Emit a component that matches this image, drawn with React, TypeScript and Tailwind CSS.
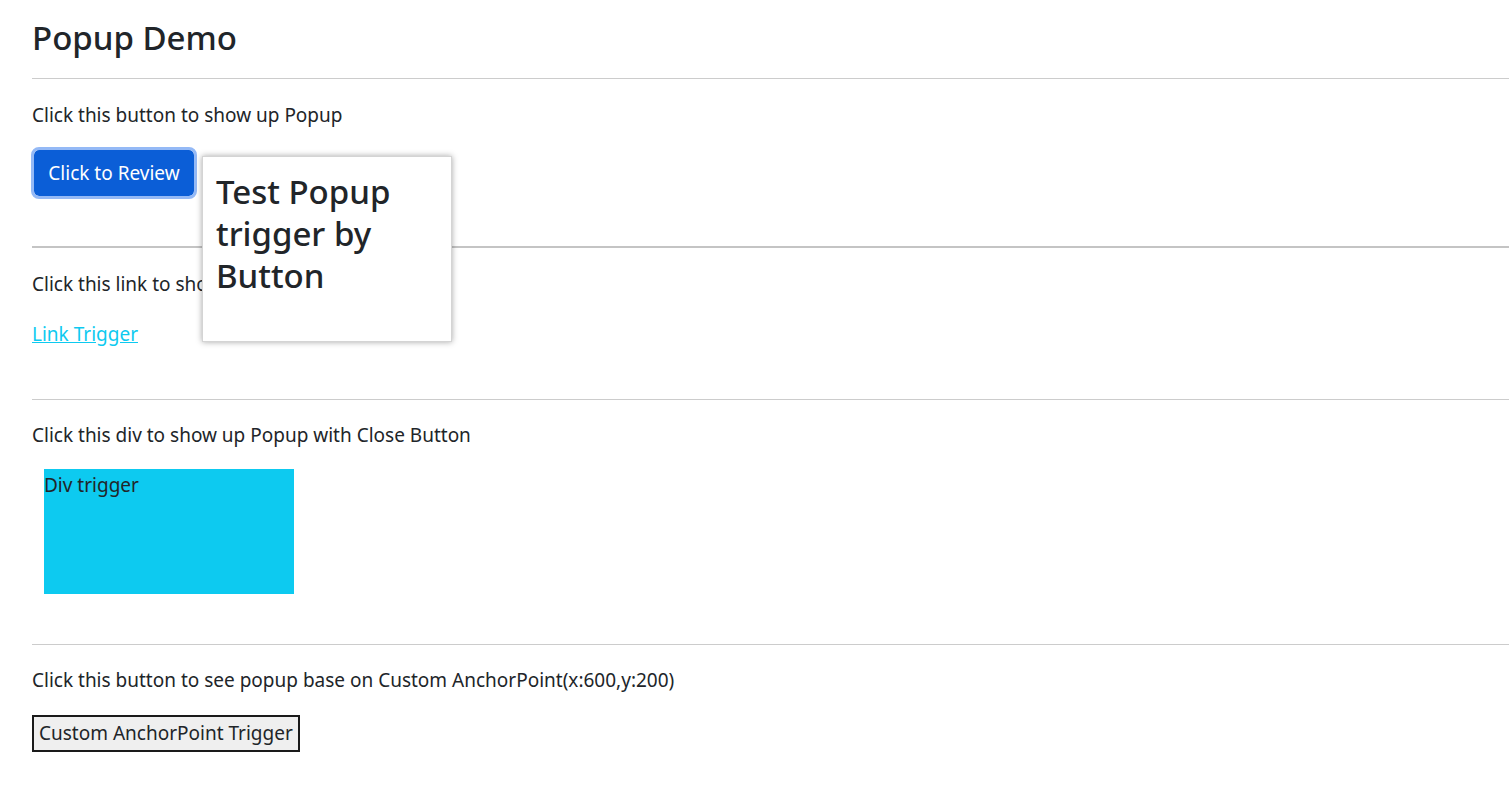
export default function App() {
  return (
    <div className="relative min-h-screen bg-white pl-8 pt-[16px] font-['Noto_Sans',sans-serif] text-[19px] text-[#212529]">
      <h2 className="h-[44px] text-[33px] font-medium leading-[44px]">Popup Demo</h2>
      <div className="mt-[18px] h-px bg-[#cccccc]" />

      <p className="mt-[23px] h-[27px] leading-[27px]">Click this button to show up Popup</p>
      <button
        type="button"
        className="ml-[2px] mt-[21px] h-[46px] w-[160px] rounded-[5px] bg-[#0b5ed7] text-white outline-[3px] outline-[#94b9f6] leading-[46px]"
      >
        Click to Review
      </button>

      <div className="mt-[50px] h-[2px] bg-[#c4c4c4]" />
      <p className="mt-[23px] h-[27px] leading-[27px]">Click this link to show up Popup</p>
      <a href="#" className="mt-[23px] block h-[27px] w-fit leading-[27px] text-[#0dcaf0] underline">
        Link Trigger
      </a>

      <div className="mt-[51px] h-px bg-[#cccccc]" />
      <p className="mt-[22px] h-[27px] leading-[27px]">Click this div to show up Popup with Close Button</p>
      <div className="ml-[12px] mt-[20px] h-[125px] w-[250px] bg-[#0dcaf0] leading-[32px]">Div trigger</div>

      <div className="mt-[50px] h-px bg-[#cccccc]" />
      <p className="mt-[22px] h-[27px] leading-[27px]">
        Click this button to see popup base on Custom AnchorPoint(x:600,y:200)
      </p>
      <button
        type="button"
        className="mt-[21px] h-[37px] border-2 border-[#1a1a1a] bg-[#efefef] px-[5px] leading-[33px]"
      >
        Custom AnchorPoint Trigger
      </button>

      <div className="absolute left-[202px] top-[156px] h-[186px] w-[250px] border border-[#d4d4d4] bg-white px-[13px] pt-[14px] shadow-[0_0_6px_rgba(0,0,0,0.35)]">
        <h2 className="text-[33px] font-medium leading-[42px]">Test Popup trigger by Button</h2>
      </div>
    </div>
  );
}
